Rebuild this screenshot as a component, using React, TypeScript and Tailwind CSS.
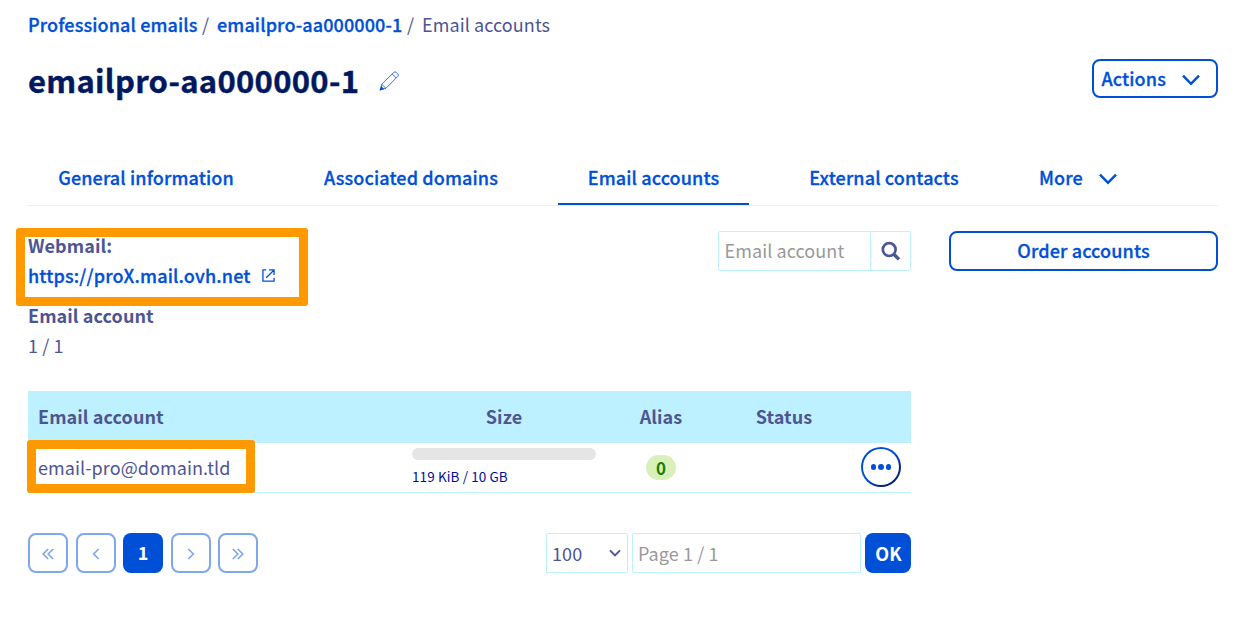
import React from "react";

const rows = [{ email: "email-pro@domain.tld", size: "119 KiB / 10 GB", alias: 0 }];

const strong = "font-medium tracking-[0.12px] [-webkit-text-stroke:0.3px_currentColor]";

function ChevronDown({ className }: { className: string }) {
  return (
    <svg viewBox="0 0 18 12" className={className} fill="none" stroke="currentColor" strokeWidth="2.5">
      <path d="M1 1.6 L9 9.8 L17 1.6" />
    </svg>
  );
}

function Tab({ label, className }: { label: string; className: string }) {
  return (
    <a className={`flex h-[54px] shrink-0 items-center justify-center whitespace-nowrap border-b-2 pb-px ${className}`}>
      {label}
    </a>
  );
}

function PageButton({ d, className }: { d: string; className: string }) {
  return (
    <button className={`flex size-10 items-center justify-center rounded-lg border-2 border-[#7fa7eb] text-[#7fa7eb] ${className}`}>
      <svg viewBox="0 0 16 16" className="mt-px size-4" fill="none" stroke="currentColor" strokeWidth="1.7">
        <path d={d} />
      </svg>
    </button>
  );
}

export default function App() {
  return (
    <div className="relative h-[629px] w-[1241px] overflow-hidden bg-white pl-7 pr-[23px] font-['Noto_Sans_CJK_SC',sans-serif] text-[18px] leading-[30px] tracking-[0.08px] text-[#4d5592]">
      <nav className="flex h-12 items-center whitespace-nowrap">
        <a className={`w-[174px] text-[#0050d7] ${strong}`}>Professional emails</a>
        <span className="w-[15px]">/</span>
        <a className={`w-[190px] text-[#0050d7] ${strong}`}>emailpro-aa000000-1</a>
        <span className="w-[15px]">/</span>
        <span>Email accounts</span>
      </nav>

      <header className="mt-[11px] flex h-[39px] items-start justify-between">
        <div className="flex items-center">
          <h1 className="h-11 w-[351px] whitespace-nowrap text-[31px] font-bold leading-[42px] tracking-[0.3px] text-[#00185e] [-webkit-text-stroke:0.4px_currentColor]">emailpro-aa000000-1</h1>
          <svg viewBox="0 0 20 20" className="size-5" fill="none" stroke="#0050d7" strokeWidth="1">
            <path d="M1.4 18.9 L2.8 13.3 L14.8 1.3 Q16 .3 17.3 1.4 L18.9 3 Q20 4.2 18.9 5.3 L6.9 17.3 Z M2.8 13.3 L6.9 17.3 M13.2 2.9 L17.3 7" strokeWidth=".8" />
            <path d="M.4 19.8 L2.1 15 L5.2 18.1 Z" fill="#0050d7" stroke="none" />
          </svg>
        </div>
        <button className={`flex h-[39px] w-[126px] items-center rounded-lg border-2 border-[#0050d7] pl-[7.5px] text-[#0050d7] ${strong}`}>
          <span className="w-[80.5px] pb-[2px] text-left">Actions</span>
          <ChevronDown className="mt-[2px] h-3 w-[18px]" />
        </button>
      </header>

      <nav className={`mt-[53px] flex h-[55px] border-b border-[#e5f2fb] text-[#0050d7] ${strong}`}>
        <Tab label="General information" className="w-[236px] border-transparent" />
        <Tab label="Associated domains" className="ml-[30px] w-[234px] border-transparent" />
        <Tab label="Email accounts" className="ml-[30px] w-[191px] border-[#0050d7]" />
        <Tab label="External contacts" className="ml-[30px] w-[210px] border-transparent" />
        <div className="ml-[50px] flex h-[51px] items-center">
          <span className="w-[60px]">More</span>
          <ChevronDown className="mt-[5px] h-3 w-[18px]" />
        </div>
      </nav>

      <div className="flex items-start justify-between">
        <main className="w-[883px]">
          <div className="flex h-[185px] justify-between pt-[25px]">
            <div className="-mt-px whitespace-nowrap">
              <div className="relative pb-[10px]">
                <p className="font-bold">Webmail:</p>
                <a className={`flex items-center text-[#0050d7] ${strong}`}>
                  <span className="w-[234px] tracking-[0.16px]">https://proX.mail.ovh.net</span>
                  <svg viewBox="0 0 14 14" className="mt-px size-[13px]" fill="none" stroke="currentColor" strokeWidth="1.4">
                    <path d="M4.5 1 H1 V13 H13 V9.5 M7.5 1 H13 V6.5 M13 1 L4.5 9.5" />
                  </svg>
                </a>
                <div className="absolute -left-3 -top-[2px] h-[78px] w-[292px] rounded-[3px] border-[9px] border-[#ff9900]" />
              </div>
              <p className="font-bold">Email account</p>
              <p>1 / 1</p>
            </div>
            <div className="flex h-10 w-[193px] rounded-[2px] border border-[#bef1ff]">
              <span className="w-[152px] border-r border-[#bef1ff] pl-[5.5px] leading-[36px] text-[#999]">Email account</span>
              <span className="flex flex-1 items-center justify-center">
                <svg viewBox="0 0 20 20" className="size-5" fill="none" stroke="currentColor">
                  <circle cx="8.2" cy="8.6" r="6.4" strokeWidth="2.7" />
                  <path d="M12.8 13.2 L18 18.4" strokeWidth="3.4" />
                </svg>
              </span>
            </div>
          </div>

          <table className="w-full table-fixed border-separate border-spacing-0 whitespace-nowrap">
            <thead>
              <tr className="h-[52px] bg-[#bef1ff] font-bold">
                <th className="w-[374px] p-0 pb-[2px] pl-[10px] text-left">Email account</th>
                <th className="w-[204px] p-0 pb-[2px]">Size</th>
                <th className="w-[110px] p-0 pb-[2px]">Alias</th>
                <th className="w-[135px] p-0 pb-[2px] pl-px">Status</th>
                <th />
              </tr>
            </thead>
            <tbody>
              {rows.map((row) => (
                <tr key={row.email} className="h-[50px]">
                  <td className="relative border-b border-[#bef1ff] p-0 pb-[2px] pl-[10px]">
                    {row.email}
                    <div className="absolute -left-px -top-[3px] h-[53px] w-[228px] rounded-[3px] border-[9px] border-[#ff9900]" />
                  </td>
                  <td className="border-b border-[#bef1ff] px-[10px] py-0">
                    <div className="mt-[-1px] h-3 rounded-full bg-[#e5e5e5]" />
                    <div className="mt-[6px] h-5 text-[13.5px] leading-5 tracking-[0.1px] text-[#000e9c]">{row.size}</div>
                  </td>
                  <td className="border-b border-[#bef1ff] p-0">
                    <span className="mx-auto block h-[25px] w-[30px] rounded-full bg-[#d9f1b9] text-center text-[17px] font-bold leading-[25px] text-[#1f8000]">
                      {row.alias}
                    </span>
                  </td>
                  <td className="border-b border-[#bef1ff]" />
                  <td className="border-b border-[#bef1ff] p-0">
                    <button className="-mt-px ml-[10px] flex size-10 items-center justify-center rounded-full bg-gradient-to-br from-[#0050d7] from-50% to-[#00257a] to-75%">
                      <span className="flex size-9 items-center justify-center gap-[2px] rounded-full bg-white">
                        <i className="size-[5.5px] rounded-full bg-[#0050d7]" />
                        <i className="size-[5.5px] rounded-full bg-[#0050d7]" />
                        <i className="size-[5.5px] rounded-full bg-[#0050d7]" />
                      </span>
                    </button>
                  </td>
                </tr>
              ))}
            </tbody>
          </table>

          <div className="mt-10 flex h-10 justify-between">
            <div className="flex">
              <PageButton className="mr-2" d="M8.2 3 L3.2 8 L8.2 13 M13.2 3 L8.2 8 L13.2 13" />
              <PageButton className="mr-[7px]" d="M10.7 3 L5.7 8 L10.7 13" />
              <button className="mr-2 size-10 rounded-lg bg-[#0050d7] pb-[2px] font-bold text-white">1</button>
              <PageButton className="mr-[7px]" d="M5.3 3 L10.3 8 L5.3 13" />
              <PageButton className="" d="M2.8 3 L7.8 8 L2.8 13 M7.8 3 L12.8 8 L7.8 13" />
            </div>
            <div className="flex gap-1">
              <div className="flex w-[82px] items-center justify-between rounded-[2px] border border-[#bef1ff] pl-[5px] pr-[6px]">
                <span>100</span>
                <svg viewBox="0 0 12 8" className="h-2 w-3" fill="none" stroke="currentColor" strokeWidth="2">
                  <path d="M1 1.4 L6 6.4 L11 1.4" />
                </svg>
              </div>
              <div className="w-[229px] rounded-[2px] border border-[#bef1ff] pl-[5px] leading-[38px] text-[#999]">Page 1 / 1</div>
              <button className="w-[46px] rounded-lg bg-[#0050d7] pl-px font-bold text-white">OK</button>
            </div>
          </div>
        </main>
        <button className={`mt-[25px] h-10 w-[269px] rounded-lg border-2 border-[#0050d7] pb-[2px] text-[#0050d7] ${strong}`}>Order accounts</button>
      </div>
    </div>
  );
}
